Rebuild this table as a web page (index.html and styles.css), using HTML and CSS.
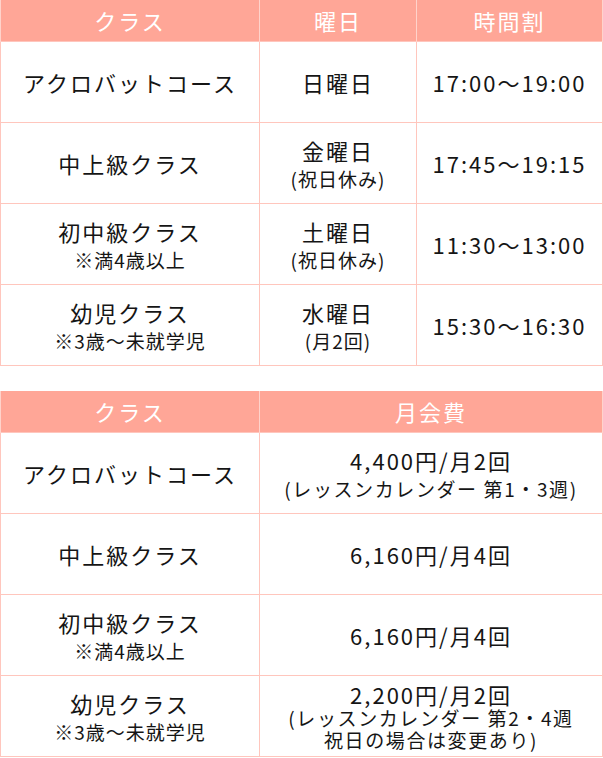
FILE: index.html
```html
<!DOCTYPE html>
<html lang="ja">
<head>
<meta charset="utf-8">
<link rel="stylesheet" href="styles.css">
</head>
<body>
<table class="tbl schedule">
  <colgroup><col class="c1"><col class="c2"><col class="c3"></colgroup>
  <thead>
    <tr><th>クラス</th><th>曜日</th><th>時間割</th></tr>
  </thead>
  <tbody>
    <tr><td><span class="big">アクロバットコース</span></td><td><span class="big">日曜日</span></td><td><span class="big">17:00〜19:00</span></td></tr>
    <tr><td><span class="big">中上級クラス</span></td><td><span class="big">金曜日</span><span class="small">(祝日休み)</span></td><td><span class="big">17:45〜19:15</span></td></tr>
    <tr><td><span class="big">初中級クラス</span><span class="small">※満4歳以上</span></td><td><span class="big">土曜日</span><span class="small">(祝日休み)</span></td><td><span class="big">11:30〜13:00</span></td></tr>
    <tr><td><span class="big">幼児クラス</span><span class="small">※3歳〜未就学児</span></td><td><span class="big">水曜日</span><span class="small">(月2回)</span></td><td><span class="big">15:30〜16:30</span></td></tr>
  </tbody>
</table>
<table class="tbl fees">
  <colgroup><col class="c1"><col class="c2w"></colgroup>
  <thead>
    <tr><th>クラス</th><th>月会費</th></tr>
  </thead>
  <tbody>
    <tr><td><span class="big">アクロバットコース</span></td><td class="fee"><span class="big">4,400円/月2回</span><span class="small">(レッスンカレンダー 第1・3週)</span></td></tr>
    <tr><td><span class="big">中上級クラス</span></td><td class="fee"><span class="big">6,160円/月4回</span></td></tr>
    <tr><td><span class="big">初中級クラス</span><span class="small">※満4歳以上</span></td><td class="fee"><span class="big">6,160円/月4回</span></td></tr>
    <tr><td><span class="big">幼児クラス</span><span class="small">※3歳〜未就学児</span></td><td class="fee tight"><span class="big">2,200円/月2回</span><span class="small">(レッスンカレンダー 第2・4週</span><span class="small">祝日の場合は変更あり)</span></td></tr>
  </tbody>
</table>
</body>
</html>
```
FILE: styles.css
```css
html, body {
  margin: 0;
  padding: 0;
  background: #ffffff;
}
body {
  font-family: "Noto Sans CJK JP", "Noto Sans", sans-serif;
  color: #151515;
}
.tbl {
  width: 602px;
  border-collapse: collapse;
  table-layout: fixed;
}
.fees {
  margin-top: 25px;
}
.c1 { width: 259px; }
.c2 { width: 157px; }
.c3 { width: 186px; }
.c2w { width: 343px; }
.tbl th {
  height: 41px;
  padding: 0;
  background: #ffa697;
  color: #ffffff;
  font-weight: 400;
  font-size: 22px;
  letter-spacing: 2px;
  line-height: 41px;
  text-align: center;
  border-left: 1px solid #ffd3cb;
  border-right: 1px solid #ffd3cb;
}
.tbl td {
  height: 80px;
  padding: 0;
  text-align: center;
  vertical-align: middle;
  border: 1px solid #ffc6bd;
}
.big {
  display: block;
  font-size: 22px;
  letter-spacing: 2px;
  line-height: 30px;
}
.small {
  display: block;
  font-size: 19px;
  letter-spacing: 1px;
  line-height: 27px;
}
.fee .small {
  letter-spacing: 1.6px;
}
.tight .big {
  line-height: 26px;
}
.tight .small {
  line-height: 22px;
}
```
